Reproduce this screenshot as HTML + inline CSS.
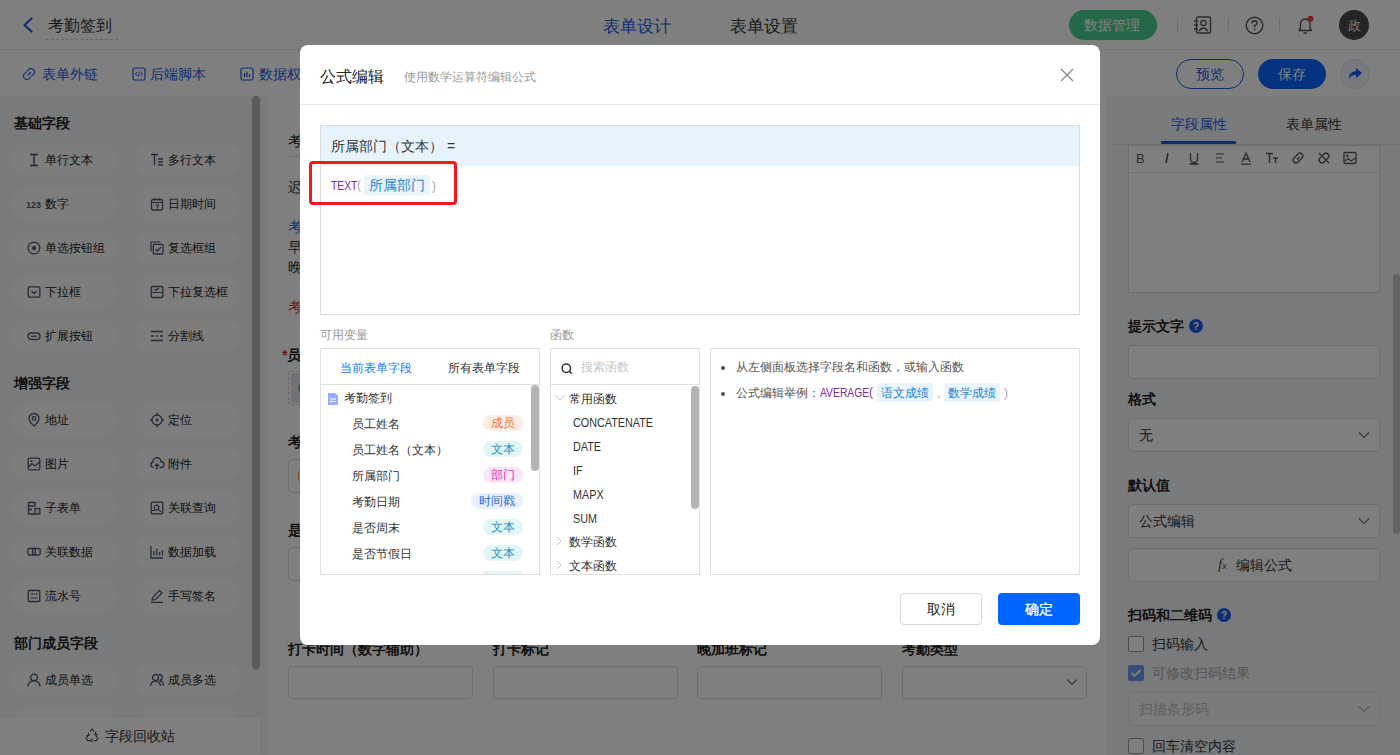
<!DOCTYPE html>
<html><head><meta charset="utf-8">
<style>
*{box-sizing:border-box;margin:0;padding:0}
html,body{width:1400px;height:755px;overflow:hidden;background:#fff;font-family:"Liberation Sans",sans-serif;color:#222;font-size:14px}
.a{position:absolute}
.t{position:absolute;white-space:nowrap;line-height:1}
svg{display:block}
/* header */
#hdr{left:0;top:0;width:1400px;height:50px;background:#fff;border-bottom:1px solid #e8e8ea}
#bar2{left:0;top:50px;width:1400px;height:46px;background:#fff}
#left{left:0;top:96px;width:268px;height:659px;background:#f3f4f7}
#canvas{left:268px;top:96px;width:838px;height:659px;background:#fff}
#right{left:1106px;top:96px;width:294px;height:659px;background:#f3f4f7}
.pill{position:absolute;width:105px;height:34px;border-radius:17px;background:#fafbfc}
.pill .ic{position:absolute;left:15px;top:10px;width:14px;height:14px}
.pill .tx{position:absolute;left:33px;top:11px;font-size:12px;line-height:13px;color:#222;white-space:nowrap}
.sec{position:absolute;left:14px;font-size:14px;font-weight:bold;color:#222;line-height:14px}
.inp{position:absolute;border:1px solid #d9d9d9;border-radius:4px;background:#fff}
.lbl{position:absolute;font-size:14px;font-weight:bold;color:#222;line-height:14px;white-space:nowrap}
#mask{left:0;top:0;width:1400px;height:755px;background:rgba(0,0,0,.5)}
#modal{left:300px;top:45px;width:800px;height:600px;background:#fff;border-radius:8px;overflow:hidden}
.box{position:absolute;border:1px solid #e3e3e3;background:#fff}
.tag{position:absolute;height:16px;border-radius:8px;font-size:12px;line-height:16px;padding:0 8px;white-space:nowrap}
.var{position:absolute;left:31px;font-size:12px;line-height:14px;color:#333;white-space:nowrap}
.fn{position:absolute;font-size:12px;line-height:14px;color:#333;white-space:nowrap;transform:scaleX(0.9);transform-origin:0 0}
</style></head><body>

<!-- ============ HEADER ============ -->
<div id="hdr" class="a">
  <svg class="a" style="left:21px;top:17px" width="14" height="16" viewBox="0 0 14 16"><path d="M10.5 1.5 L3.5 8 L10.5 14.5" fill="none" stroke="#1a5ce6" stroke-width="2.2" stroke-linecap="round" stroke-linejoin="round"/></svg>
  <div class="t" style="left:48px;top:18px;font-size:16px;color:#333">考勤签到</div>
  <div class="a" style="left:46px;top:39px;width:72px;border-top:1px dashed #ccc"></div>
  <div class="t" style="left:603px;top:18px;font-size:17px;color:#1a5ce6">表单设计</div>
  <div class="t" style="left:730px;top:18px;font-size:17px;color:#333">表单设置</div>
  <div class="a" style="left:1069px;top:10px;width:88px;height:30px;border-radius:15px;background:#4ad08f"></div>
  <div class="t" style="left:1084px;top:18px;font-size:14px;color:#fff">数据管理</div>
  <div class="a" style="left:1177px;top:18px;width:1px;height:14px;background:#ddd"></div>
  <div class="a" style="left:1228px;top:18px;width:1px;height:14px;background:#ddd"></div>
  <div class="a" style="left:1279px;top:18px;width:1px;height:14px;background:#ddd"></div>
  <svg class="a" style="left:1193px;top:16px" width="19" height="18" viewBox="0 0 19 18"><rect x="3.5" y="1" width="14" height="16" rx="1.5" fill="none" stroke="#555" stroke-width="1.4"/><circle cx="10.5" cy="7" r="2.6" fill="none" stroke="#555" stroke-width="1.4"/><path d="M6 15 Q10.5 9 15 15" fill="none" stroke="#555" stroke-width="1.4"/><path d="M1 5h4M1 9h4M1 13h4" stroke="#555" stroke-width="1.3"/></svg>
  <svg class="a" style="left:1245px;top:16px" width="19" height="19" viewBox="0 0 19 19"><circle cx="9.5" cy="9.5" r="8.3" fill="none" stroke="#555" stroke-width="1.4"/><path d="M7 7.3 Q7 4.8 9.5 4.8 Q12 4.8 12 7.1 Q12 8.6 9.6 9.6 L9.6 11.3" fill="none" stroke="#555" stroke-width="1.5"/><circle cx="9.6" cy="13.6" r="0.95" fill="#555"/></svg>
  <svg class="a" style="left:1296px;top:15px" width="20" height="20" viewBox="0 0 20 20"><path d="M3 15.5 H15.5 L14 13.5 V9 Q14 4.5 9.3 4 Q4.5 4.5 4.5 9 V13.5 Z" fill="none" stroke="#555" stroke-width="1.4" stroke-linejoin="round"/><path d="M7.5 18 H11" stroke="#555" stroke-width="1.4"/><circle cx="14.5" cy="3.8" r="3" fill="#e64545"/></svg>
  <div class="a" style="left:1339px;top:10px;width:30px;height:30px;border-radius:15px;background:#4a4a4a"></div>
  <div class="t" style="left:1348px;top:19px;font-size:13px;color:#eee">政</div>
</div>

<!-- ============ BAR2 ============ -->
<div id="bar2" class="a">
  <svg class="a" style="left:22px;top:17px" width="14" height="14" viewBox="0 0 14 14"><path d="M6 8 L8.5 5.5 M5.2 4.2 L7.2 2.2 Q9 0.6 10.8 2.2 L11.8 3.2 Q13.4 5 11.8 6.8 L9.8 8.8 M8.8 9.8 L6.8 11.8 Q5 13.4 3.2 11.8 L2.2 10.8 Q0.6 9 2.2 7.2 L4.2 5.2" fill="none" stroke="#1a5ce6" stroke-width="1.1" stroke-linecap="round"/></svg>
  <div class="t" style="left:42px;top:17px;font-size:14px;color:#1a5ce6">表单外链</div>
  <svg class="a" style="left:132px;top:17px" width="14" height="14" viewBox="0 0 14 14"><rect x="1" y="1" width="12" height="12" rx="1.5" fill="none" stroke="#1a5ce6" stroke-width="1.2"/><path d="M5 5 L3.5 7 L5 9 M9 5 L10.5 7 L9 9 M7.6 4.5 L6.4 9.5" fill="none" stroke="#1a5ce6" stroke-width="1"/></svg>
  <div class="t" style="left:150px;top:17px;font-size:14px;color:#1a5ce6">后端脚本</div>
  <svg class="a" style="left:240px;top:17px" width="14" height="14" viewBox="0 0 14 14"><rect x="1" y="1" width="12" height="12" rx="1.5" fill="none" stroke="#1a5ce6" stroke-width="1.2"/><path d="M4.5 10V6 M7 10V4.5 M9.5 10V7" stroke="#1a5ce6" stroke-width="1.2"/></svg>
  <div class="t" style="left:259px;top:17px;font-size:14px;color:#1a5ce6">数据权限</div>
  <div class="a" style="left:1176px;top:9px;width:68px;height:30px;border-radius:15px;border:1.5px solid #1a5ce6"></div>
  <div class="t" style="left:1196px;top:17px;font-size:14px;color:#1a5ce6">预览</div>
  <div class="a" style="left:1258px;top:9px;width:68px;height:30px;border-radius:15px;background:#0a66ff"></div>
  <div class="t" style="left:1278px;top:17px;font-size:14px;color:#fff">保存</div>
  <div class="a" style="left:1340px;top:9px;width:30px;height:30px;border-radius:15px;background:#eef2fb;border:1px solid #dde4f3"></div>
  <svg class="a" style="left:1347px;top:17px" width="16" height="14" viewBox="0 0 16 14"><path d="M9 1 L15 6 L9 11 V8 Q4 7.8 1.5 12.5 Q2 4.5 9 4 Z" fill="#1a5ce6"/></svg>
</div>

<!-- ============ LEFT PANEL ============ -->
<div id="left" class="a">
<div class="sec" style="top:20px">基础字段</div>
<div class="pill" style="left:12px;top:47px"><svg class="ic" width="14" height="14" viewBox="0 0 14 14" style="overflow:visible"><path d="M3 1.5H11M3 12.5H11M7 1.5V12.5" stroke="#4b5670" stroke-width="1.5" fill="none"/></svg><div class="tx">单行文本</div></div>
<div class="pill" style="left:135px;top:47px"><svg class="ic" width="14" height="14" viewBox="0 0 14 14" style="overflow:visible"><path d="M1 1.5H8M4.5 1.5V12.5M8 6H13M8 9H13M8 12H13" stroke="#4b5670" stroke-width="1.4" fill="none"/></svg><div class="tx">多行文本</div></div>
<div class="pill" style="left:12px;top:91px"><svg class="ic" width="14" height="14" viewBox="0 0 14 14" style="overflow:visible"><text x="-1" y="11" font-size="9" font-weight="bold" fill="#4b5670" font-family="Liberation Sans">123</text></svg><div class="tx">数字</div></div>
<div class="pill" style="left:135px;top:91px"><svg class="ic" width="14" height="14" viewBox="0 0 14 14" style="overflow:visible"><rect x="1.5" y="2.5" width="11" height="10.5" rx="1.5" stroke="#4b5670" stroke-width="1.3" fill="none"/><path d="M1.5 5.5H12.5M4.5 1V3.5M9.5 1V3.5M5.5 8H8.5L6.8 11.5" stroke="#4b5670" stroke-width="1.1" fill="none"/></svg><div class="tx">日期时间</div></div>
<div class="pill" style="left:12px;top:135px"><svg class="ic" width="14" height="14" viewBox="0 0 14 14" style="overflow:visible"><circle cx="7" cy="7" r="5.8" stroke="#4b5670" stroke-width="1.3" fill="none"/><circle cx="7" cy="7" r="2" fill="#4b5670"/></svg><div class="tx">单选按钮组</div></div>
<div class="pill" style="left:135px;top:135px"><svg class="ic" width="14" height="14" viewBox="0 0 14 14" style="overflow:visible"><path d="M1 10.5V1H10.5" stroke="#4b5670" stroke-width="1.2" fill="none"/><rect x="3.3" y="3.3" width="9.7" height="9.7" rx="1" stroke="#4b5670" stroke-width="1.3" fill="none"/><path d="M5.5 8L7.5 10L11 6" stroke="#4b5670" stroke-width="1.3" fill="none"/></svg><div class="tx">复选框组</div></div>
<div class="pill" style="left:12px;top:179px"><svg class="ic" width="14" height="14" viewBox="0 0 14 14" style="overflow:visible"><rect x="1.2" y="1.8" width="11.6" height="10.4" rx="1" stroke="#4b5670" stroke-width="1.3" fill="none"/><path d="M4.5 6L7 8.5L9.5 6" stroke="#4b5670" stroke-width="1.3" fill="none"/></svg><div class="tx">下拉框</div></div>
<div class="pill" style="left:135px;top:179px"><svg class="ic" width="14" height="14" viewBox="0 0 14 14" style="overflow:visible"><rect x="1.2" y="1.5" width="11.6" height="11" rx="1.5" stroke="#4b5670" stroke-width="1.3" fill="none"/><path d="M1.2 7.5H12.8M4.5 4L6 5.3L9 3" stroke="#4b5670" stroke-width="1.2" fill="none"/></svg><div class="tx">下拉复选框</div></div>
<div class="pill" style="left:12px;top:223px"><svg class="ic" width="14" height="14" viewBox="0 0 14 14" style="overflow:visible"><rect x="1" y="4" width="12" height="6.5" rx="3.25" stroke="#4b5670" stroke-width="1.4" fill="none"/><path d="M4 7.25H10" stroke="#4b5670" stroke-width="1.2"/></svg><div class="tx">扩展按钮</div></div>
<div class="pill" style="left:135px;top:223px"><svg class="ic" width="14" height="14" viewBox="0 0 14 14" style="overflow:visible"><path d="M1 2.5H13M1 7H4M6 7H8M10 7H13M1 11.5H13" stroke="#4b5670" stroke-width="1.3" fill="none"/></svg><div class="tx">分割线</div></div>
<div class="sec" style="top:280px">增强字段</div>
<div class="pill" style="left:12px;top:307px"><svg class="ic" width="14" height="14" viewBox="0 0 14 14" style="overflow:visible"><path d="M7 13C7 13 2 8.5 2 5.5A5 5 0 0 1 12 5.5C12 8.5 7 13 7 13Z" stroke="#4b5670" stroke-width="1.3" fill="none"/><circle cx="7" cy="5.5" r="1.8" stroke="#4b5670" stroke-width="1.2" fill="none"/></svg><div class="tx">地址</div></div>
<div class="pill" style="left:135px;top:307px"><svg class="ic" width="14" height="14" viewBox="0 0 14 14" style="overflow:visible"><circle cx="7" cy="7" r="5" stroke="#4b5670" stroke-width="1.3" fill="none"/><circle cx="7" cy="7" r="1.5" fill="#4b5670"/><path d="M7 0V2.5M7 11.5V14M0 7H2.5M11.5 7H14" stroke="#4b5670" stroke-width="1.3"/></svg><div class="tx">定位</div></div>
<div class="pill" style="left:12px;top:351px"><svg class="ic" width="14" height="14" viewBox="0 0 14 14" style="overflow:visible"><rect x="1.2" y="1.2" width="11.6" height="11.6" rx="1.5" stroke="#4b5670" stroke-width="1.3" fill="none"/><path d="M1.5 10L5 6.5L8 9L12.5 5" stroke="#4b5670" stroke-width="1.2" fill="none"/><circle cx="4.5" cy="4.2" r="1" fill="#4b5670"/></svg><div class="tx">图片</div></div>
<div class="pill" style="left:135px;top:351px"><svg class="ic" width="14" height="14" viewBox="0 0 14 14" style="overflow:visible"><path d="M3.5 10.5A2.8 2.8 0 0 1 3 5A4 4 0 0 1 11 4.5A3 3 0 0 1 11 10.5H9.5M7 12.5V7M5 9L7 7L9 9" stroke="#4b5670" stroke-width="1.3" fill="none"/></svg><div class="tx">附件</div></div>
<div class="pill" style="left:12px;top:395px"><svg class="ic" width="14" height="14" viewBox="0 0 14 14" style="overflow:visible"><path d="M8 13H1.5V1.5H8V5M1.5 5H8M1.5 8.5H5" stroke="#4b5670" stroke-width="1.3" fill="none"/><rect x="8" y="7.5" width="4.8" height="5.5" stroke="#4b5670" stroke-width="1.3" fill="none"/></svg><div class="tx">子表单</div></div>
<div class="pill" style="left:135px;top:395px"><svg class="ic" width="14" height="14" viewBox="0 0 14 14" style="overflow:visible"><rect x="1.2" y="1.2" width="11.6" height="11.6" rx="1" stroke="#4b5670" stroke-width="1.3" fill="none"/><circle cx="6.5" cy="6.5" r="2.3" stroke="#4b5670" stroke-width="1.2" fill="none"/><path d="M8.3 8.3L11 11M1.2 9.5H5" stroke="#4b5670" stroke-width="1.2"/></svg><div class="tx">关联查询</div></div>
<div class="pill" style="left:12px;top:439px"><svg class="ic" width="14" height="14" viewBox="0 0 14 14" style="overflow:visible"><rect x="0.8" y="3.5" width="7.5" height="6.5" rx="1.5" stroke="#4b5670" stroke-width="1.3" fill="none"/><rect x="5.7" y="3.5" width="7.5" height="6.5" rx="1.5" stroke="#4b5670" stroke-width="1.3" fill="none"/></svg><div class="tx">关联数据</div></div>
<div class="pill" style="left:135px;top:439px"><svg class="ic" width="14" height="14" viewBox="0 0 14 14" style="overflow:visible"><path d="M1 1V13H13M4 10.5V6M6.8 10.5V3.5M9.6 10.5V7M12.4 10.5V5" stroke="#4b5670" stroke-width="1.3" fill="none"/></svg><div class="tx">数据加载</div></div>
<div class="pill" style="left:12px;top:483px"><svg class="ic" width="14" height="14" viewBox="0 0 14 14" style="overflow:visible"><rect x="1.2" y="1.5" width="11.6" height="11" rx="1" stroke="#4b5670" stroke-width="1.3" fill="none"/><path d="M3.5 5H8M3.5 9H10.5M9.5 4V6" stroke="#4b5670" stroke-width="1.2" fill="none"/></svg><div class="tx">流水号</div></div>
<div class="pill" style="left:135px;top:483px"><svg class="ic" width="14" height="14" viewBox="0 0 14 14" style="overflow:visible"><path d="M2 11L3 8L9.5 1.5L12 4L5.5 10.5Z M1 13.3H13" stroke="#4b5670" stroke-width="1.2" fill="none"/></svg><div class="tx">手写签名</div></div>
<div class="sec" style="top:540px">部门成员字段</div>
<div class="pill" style="left:12px;top:567px"><svg class="ic" width="14" height="14" viewBox="0 0 14 14" style="overflow:visible"><circle cx="7" cy="4.5" r="3.3" stroke="#4b5670" stroke-width="1.3" fill="none"/><path d="M1 13.5A6 6 0 0 1 13 13.5" stroke="#4b5670" stroke-width="1.3" fill="none"/></svg><div class="tx">成员单选</div></div>
<div class="pill" style="left:135px;top:567px"><svg class="ic" width="14" height="14" viewBox="0 0 14 14" style="overflow:visible"><circle cx="5.5" cy="4.5" r="3" stroke="#4b5670" stroke-width="1.3" fill="none"/><path d="M0.5 13A5 5 0 0 1 10.5 13M9 1.5A3 3 0 0 1 9.5 7.5A5 5 0 0 1 13.5 13" stroke="#4b5670" stroke-width="1.3" fill="none"/></svg><div class="tx">成员多选</div></div>
<div class="pill" style="left:12px;top:611px"><svg class="ic" width="14" height="14" viewBox="0 0 14 14" style="overflow:visible"></svg><div class="tx">部门单选</div></div>
<div class="pill" style="left:135px;top:611px"><svg class="ic" width="14" height="14" viewBox="0 0 14 14" style="overflow:visible"></svg><div class="tx">部门多选</div></div>
<div class="a" style="left:252px;top:0px;width:8px;height:574px;border-radius:4px;background:#b6b6b6"></div>
<div class="a" style="left:0;top:621px;width:260px;height:38px;background:#fff;box-shadow:0 -1px 3px rgba(0,0,0,.04)"></div>
<svg class="a" style="left:85px;top:632px" width="14" height="14" viewBox="0 0 14 14"><path d="M5 3.5L7 0.8L9 3.5M9.8 5.5L12.8 10.5L11.3 12.6H8.5M5.5 12.6H2.7L1.2 10.5L3.8 6" fill="none" stroke="#555" stroke-width="1.1" stroke-linejoin="round"/><path d="M7.5 10.6L5.5 12.6L7.5 14.2M3.2 4.6L4 7.4L1.3 7.9M11 3.5L10.2 6.3L12.8 6.7" fill="none" stroke="#555" stroke-width="1.1"/></svg>
<div class="t" style="left:105px;top:633px;font-size:14px;color:#333">字段回收站</div>
</div>

<!-- ============ CANVAS ============ -->
<div id="canvas" class="a">
<div class="t" style="left:20px;top:38px;font-size:14px;color:#222">考勤签到表单</div>
<div class="a" style="left:20px;top:60px;width:798px;height:1px;background:#e5e5e5"></div>
<div class="t" style="left:20px;top:84px;font-size:14px;color:#333;">迟到早退规则说明：上班时间 09:00，下班时间 18:00</div>
<div class="t" style="left:20px;top:124px;font-size:14px;color:#1a6fd0;">考勤规则</div>
<div class="t" style="left:20px;top:144px;font-size:14px;color:#333;">早上 09:00 之后打卡记为迟到</div>
<div class="t" style="left:20px;top:164px;font-size:14px;color:#333;">晚上 18:00 之前打卡记为早退</div>
<div class="t" style="left:20px;top:204px;font-size:14px;color:#d0302a;">考勤异常请及时联系管理员</div>
<div class="t" style="left:14px;top:252px;font-size:14px;color:#222;font-weight:bold"><span style="color:#d0302a">*</span>员工姓名</div>
<div class="a" style="left:20px;top:275px;width:200px;height:34px;border:1px dashed #ccc;border-radius:3px"></div>
<div class="a" style="left:23px;top:277px;width:90px;height:30px;border-radius:3px;background:#eadff0"></div>
<div class="a" style="left:30px;top:286px;width:12px;height:12px;border-radius:6px;background:#45c46a"></div>
<div class="t" style="left:20px;top:339px;font-size:14px;color:#222;font-weight:bold">考勤日期</div>
<div class="inp" style="left:20px;top:363px;width:380px;height:34px"></div>
<div class="a" style="left:30px;top:375px;width:10px;height:10px;border:1.5px solid #f0a040;border-radius:2px"></div>
<div class="t" style="left:20px;top:427px;font-size:14px;color:#222;font-weight:bold">是否周末</div>
<div class="inp" style="left:20px;top:451px;width:380px;height:34px"></div>
<div class="t" style="left:20px;top:546px;font-size:14px;color:#222;font-weight:bold">打卡时间（数字辅助）</div>
<div class="t" style="left:225px;top:546px;font-size:14px;color:#222;font-weight:bold">打卡标记</div>
<div class="t" style="left:429px;top:546px;font-size:14px;color:#222;font-weight:bold">晚加班标记</div>
<div class="t" style="left:634px;top:546px;font-size:14px;color:#222;font-weight:bold">考勤类型</div>
<div class="inp" style="left:20px;top:570px;width:185px;height:33px"></div>
<div class="inp" style="left:225px;top:570px;width:185px;height:33px"></div>
<div class="inp" style="left:429px;top:570px;width:185px;height:33px"></div>
<div class="inp" style="left:634px;top:570px;width:185px;height:33px"></div>
<svg class="a" style="left:798px;top:582px" width="12" height="8" viewBox="0 0 12 8"><path d="M1 1.5L6 6.5L11 1.5" fill="none" stroke="#777" stroke-width="1.1"/></svg>
</div>

<!-- ============ RIGHT PANEL ============ -->
<div id="right" class="a">
<div class="t" style="left:65px;top:21px;font-size:14px;color:#1a5ce6;">字段属性</div>
<div class="t" style="left:180px;top:21px;font-size:14px;color:#333;">表单属性</div>
<div class="a" style="left:55px;top:45px;width:75px;height:3px;background:#1a5ce6"></div>
<div class="a" style="left:8px;top:48px;width:286px;height:1px;background:#dcdcdc"></div>
<div class="a" style="left:22px;top:49px;width:252px;height:148px;background:#fff;border:1px solid #dcdcdc"></div>
<div class="a" style="left:23px;top:76px;width:250px;height:1px;background:#e3e3e3"></div>
<svg class="a" style="left:29px;top:55px" width="14" height="14" viewBox="0 0 14 14"><text x="1" y="12" font-size="13" fill="#555" font-family="Liberation Sans">B</text></svg>
<svg class="a" style="left:54px;top:55px" width="14" height="14" viewBox="0 0 14 14"><path d="M8 2L6 12" stroke="#555" stroke-width="1.6"/></svg>
<svg class="a" style="left:81px;top:55px" width="14" height="14" viewBox="0 0 14 14"><path d="M3.5 2V8A3.5 3.5 0 0 0 10.5 8V2M2.5 13H11.5" stroke="#555" stroke-width="1.3" fill="none"/></svg>
<svg class="a" style="left:107px;top:55px" width="14" height="14" viewBox="0 0 14 14"><path d="M3 3H11M3 7H9M3 11H11" stroke="#555" stroke-width="1.2" fill="none"/></svg>
<svg class="a" style="left:133px;top:55px" width="14" height="14" viewBox="0 0 14 14"><path d="M3 11L7 2L11 11M4.5 8H9.5M2 13.2H12" stroke="#555" stroke-width="1.3" fill="none"/></svg>
<svg class="a" style="left:159px;top:55px" width="14" height="14" viewBox="0 0 14 14"><path d="M1 2.5H8M4.5 2.5V12M8 7H13M10.5 7V12" stroke="#555" stroke-width="1.5" fill="none"/></svg>
<svg class="a" style="left:185px;top:55px" width="14" height="14" viewBox="0 0 14 14"><path d="M6 8.5L8.5 6M5 5L7 3A2.3 2.3 0 0 1 11 7L9 9M9 9L7 11A2.3 2.3 0 0 1 3 7L5 5" stroke="#555" stroke-width="1.3" fill="none"/></svg>
<svg class="a" style="left:211px;top:55px" width="14" height="14" viewBox="0 0 14 14"><path d="M5 5L7 3A2.3 2.3 0 0 1 11 7L9 9M9 9L7 11A2.3 2.3 0 0 1 3 7L5 5M2 2L12 12" stroke="#555" stroke-width="1.3" fill="none"/></svg>
<svg class="a" style="left:237px;top:55px" width="14" height="14" viewBox="0 0 14 14"><rect x="1" y="1.5" width="12" height="11" rx="1" stroke="#555" stroke-width="1.3" fill="none"/><path d="M1.5 10.5L5 7.5L8 10L12.5 7" stroke="#555" stroke-width="1.2" fill="none"/><circle cx="4.5" cy="5" r="1.2" fill="#555"/></svg>
<div class="t" style="left:22px;top:223px;font-size:14px;color:#222;font-weight:bold">提示文字</div>
<svg class="a" style="left:83px;top:223px" width="14" height="14" viewBox="0 0 14 14"><circle cx="7" cy="7" r="7" fill="#1a5ce6"/><text x="7" y="11" text-anchor="middle" font-size="10" font-weight="bold" fill="#fff" font-family="Liberation Sans">?</text></svg>
<div class="a" style="left:22px;top:249px;width:252px;height:34px;background:#fff;border:1px solid #dcdcdc;border-radius:4px"></div>
<div class="t" style="left:22px;top:296px;font-size:14px;color:#222;font-weight:bold">格式</div>
<div class="a" style="left:22px;top:322px;width:252px;height:34px;background:#fff;border:1px solid #dcdcdc;border-radius:4px"></div>
<div class="t" style="left:33px;top:332px;font-size:14px;color:#333;">无</div>
<svg class="a" style="left:252px;top:335px" width="12" height="8" viewBox="0 0 12 8"><path d="M1 1.5L6 6.5L11 1.5" fill="none" stroke="#777" stroke-width="1.1"/></svg>
<div class="t" style="left:22px;top:382px;font-size:14px;color:#222;font-weight:bold">默认值</div>
<div class="a" style="left:22px;top:408px;width:252px;height:34px;background:#fff;border:1px solid #dcdcdc;border-radius:4px"></div>
<div class="t" style="left:33px;top:418px;font-size:14px;color:#333;">公式编辑</div>
<svg class="a" style="left:252px;top:421px" width="12" height="8" viewBox="0 0 12 8"><path d="M1 1.5L6 6.5L11 1.5" fill="none" stroke="#777" stroke-width="1.1"/></svg>
<div class="a" style="left:22px;top:452px;width:252px;height:34px;background:#fff;border:1px solid #dcdcdc;border-radius:4px"></div>
<div class="t" style="left:112px;top:461px;font-size:14px;color:#555;"><i style="font-family:Liberation Serif;font-size:15px;color:#555">f</i><span style="font-size:9px;color:#555">x</span></div>
<div class="t" style="left:130px;top:462px;font-size:14px;color:#333;">编辑公式</div>
<div class="t" style="left:22px;top:512px;font-size:14px;color:#222;font-weight:bold">扫码和二维码</div>
<svg class="a" style="left:111px;top:512px" width="14" height="14" viewBox="0 0 14 14"><circle cx="7" cy="7" r="7" fill="#1a5ce6"/><text x="7" y="11" text-anchor="middle" font-size="10" font-weight="bold" fill="#fff" font-family="Liberation Sans">?</text></svg>
<div class="a" style="left:22px;top:540px;width:16px;height:16px;background:#fff;border:1px solid #9a9a9a;border-radius:2px"></div>
<div class="t" style="left:46px;top:541px;font-size:14px;color:#333;">扫码输入</div>
<div class="a" style="left:22px;top:569px;width:16px;height:16px;background:#6b9cf0;border-radius:2px"></div>
<svg class="a" style="left:22px;top:569px" width="16" height="16" viewBox="0 0 16 16"><path d="M3.5 8L6.5 11L12.5 5" fill="none" stroke="#fff" stroke-width="1.8"/></svg>
<div class="t" style="left:46px;top:570px;font-size:14px;color:#aaa;">可修改扫码结果</div>
<div class="a" style="left:22px;top:596px;width:252px;height:34px;background:#f7f7f7;border:1px solid #e3e3e3;border-radius:4px"></div>
<div class="t" style="left:33px;top:606px;font-size:14px;color:#bbb;">扫描条形码</div>
<svg class="a" style="left:252px;top:609px" width="12" height="8" viewBox="0 0 12 8"><path d="M1 1.5L6 6.5L11 1.5" fill="none" stroke="#bbb" stroke-width="1.3"/></svg>
<div class="a" style="left:22px;top:642px;width:16px;height:16px;background:#fff;border:1px solid #9a9a9a;border-radius:2px"></div>
<div class="t" style="left:46px;top:643px;font-size:14px;color:#333;">回车清空内容</div>
<div class="a" style="left:287px;top:178px;width:7px;height:260px;background:#c8c8c8;border-radius:3px"></div>
</div>

<!-- ============ MASK ============ -->
<div id="mask" class="a"></div>

<!-- ============ MODAL ============ -->
<div id="modal" class="a">
  <div class="t" style="left:20px;top:24px;font-size:16px;color:#222">公式编辑</div>
  <div class="t" style="left:104px;top:26px;font-size:12px;color:#999">使用数学运算符编辑公式</div>
  <svg class="a" style="left:760px;top:23px" width="14" height="14" viewBox="0 0 14 14"><path d="M1 1L13 13M13 1L1 13" stroke="#888" stroke-width="1.3"/></svg>
  <div class="a" style="left:0;top:59px;width:800px;height:1px;background:#e8e8e8"></div>
  <!-- formula box -->
  <div class="box" style="left:20px;top:80px;width:760px;height:190px;border-color:#dcdcdc"></div>
  <div class="a" style="left:21px;top:81px;width:758px;height:40px;background:#e6f3fd"></div>
  <div class="t" style="left:31px;top:94px;font-size:14px;color:#333">所属部门（文本） =</div>
  <div class="t" style="left:31px;top:135px;font-size:12px;color:#7a2ca0;transform:scaleX(0.86);transform-origin:0 0">TEXT</div>
  <div class="t" style="left:57px;top:134px;font-size:12px;color:#aaa">(</div>
  <div class="a" style="left:64px;top:130px;width:66px;height:20px;border-radius:3px;background:#ebf4fb"></div>
  <div class="t" style="left:69px;top:133px;font-size:14px;color:#1c83d4">所属部门</div>
  <div class="t" style="left:132px;top:135px;font-size:12px;color:#aaa">)</div>
  <div class="a" style="left:9px;top:116px;width:148px;height:44px;border:3px solid #f01a1a;border-radius:4px"></div>
  <!-- labels -->
  <div class="t" style="left:20px;top:284px;font-size:12px;color:#999">可用变量</div>
  <div class="t" style="left:250px;top:284px;font-size:12px;color:#999">函数</div>
  <!-- variables box -->
  <div class="box" style="left:20px;top:303px;width:220px;height:227px;border-color:#e0e0e0"></div>
  <div class="t" style="left:40px;top:317px;font-size:12px;color:#1677ff">当前表单字段</div>
  <div class="t" style="left:148px;top:317px;font-size:12px;color:#333">所有表单字段</div>
  <div class="a" style="left:21px;top:339px;width:218px;height:1px;background:#e0e0e0"></div>
  <div class="a" style="left:231px;top:340px;width:8px;height:86px;border-radius:4px;background:#b5b5b5"></div>
  <svg class="a" style="left:28px;top:348px" width="11" height="12" viewBox="0 0 11 12"><path d="M0 0H7L10 3V12H0Z" fill="#98aefc"/><path d="M2 6H8M2 8.5H8" stroke="#fff" stroke-width="1"/></svg>
  <div class="t" style="left:44px;top:347px;font-size:12px;color:#333">考勤签到</div>
  <div class="t" style="left:52px;top:373px;font-size:12px;color:#333">员工姓名</div>
  <div class="tag" style="left:183px;top:370px;width:40px;background:#fdece3;color:#f0782f;text-align:center;padding:0">成员</div>
  <div class="t" style="left:52px;top:399px;font-size:12px;color:#333">员工姓名（文本）</div>
  <div class="tag" style="left:183px;top:396px;width:40px;background:#e4f5f6;color:#1a90c8;text-align:center;padding:0">文本</div>
  <div class="t" style="left:52px;top:425px;font-size:12px;color:#333">所属部门</div>
  <div class="tag" style="left:183px;top:422px;width:40px;background:#fbe6f7;color:#d42fb8;text-align:center;padding:0">部门</div>
  <div class="t" style="left:52px;top:451px;font-size:12px;color:#333">考勤日期</div>
  <div class="tag" style="left:171px;top:448px;width:52px;background:#e9f0fd;color:#1f6fd8;text-align:center;padding:0">时间戳</div>
  <div class="t" style="left:52px;top:477px;font-size:12px;color:#333">是否周末</div>
  <div class="tag" style="left:183px;top:474px;width:40px;background:#e4f5f6;color:#1a90c8;text-align:center;padding:0">文本</div>
  <div class="t" style="left:52px;top:503px;font-size:12px;color:#333">是否节假日</div>
  <div class="tag" style="left:183px;top:500px;width:40px;background:#e4f5f6;color:#1a90c8;text-align:center;padding:0">文本</div>
  <div class="tag" style="left:183px;top:526px;width:40px;height:3px;border-radius:8px 8px 0 0;background:#e4f5f6"></div>
  <!-- functions box -->
  <div class="box" style="left:250px;top:303px;width:150px;height:227px;border-color:#e0e0e0"></div>
  <svg class="a" style="left:261px;top:318px" width="12" height="12" viewBox="0 0 12 12"><circle cx="5.3" cy="5.3" r="4.2" fill="none" stroke="#333" stroke-width="1.5"/><path d="M8.3 8.3L10.8 10.8" stroke="#333" stroke-width="1.6"/></svg>
  <div class="t" style="left:281px;top:316px;font-size:12px;color:#c8c8c8">搜索函数</div>
  <div class="a" style="left:251px;top:339px;width:148px;height:1px;background:#e0e0e0"></div>
  <div class="a" style="left:391px;top:341px;width:8px;height:123px;border-radius:4px;background:#b5b5b5"></div>
  <svg class="a" style="left:254px;top:349px" width="12" height="8" viewBox="0 0 12 8"><path d="M1 1L6 6L11 1" fill="none" stroke="#c8c8c8" stroke-width="1"/></svg>
  <div class="t" style="left:269px;top:348px;font-size:12px;color:#333">常用函数</div>
  <div class="fn" style="left:273px;top:371px">CONCATENATE</div>
  <div class="fn" style="left:273px;top:395px">DATE</div>
  <div class="fn" style="left:273px;top:419px">IF</div>
  <div class="fn" style="left:273px;top:443px">MAPX</div>
  <div class="fn" style="left:273px;top:467px">SUM</div>
  <svg class="a" style="left:256px;top:491px" width="6" height="10" viewBox="0 0 6 10"><path d="M1 1L5 5L1 9" fill="none" stroke="#c8c8c8" stroke-width="1"/></svg>
  <div class="t" style="left:269px;top:491px;font-size:12px;color:#333">数学函数</div>
  <svg class="a" style="left:256px;top:515px" width="6" height="10" viewBox="0 0 6 10"><path d="M1 1L5 5L1 9" fill="none" stroke="#c8c8c8" stroke-width="1"/></svg>
  <div class="t" style="left:269px;top:515px;font-size:12px;color:#333">文本函数</div>
  <!-- desc box -->
  <div class="box" style="left:410px;top:303px;width:370px;height:227px;border-color:#e0e0e0"></div>
  <div class="a" style="left:421px;top:321px;width:4px;height:4px;border-radius:2px;background:#555"></div>
  <div class="t" style="left:436px;top:316px;font-size:12px;color:#555">从左侧面板选择字段名和函数，或输入函数</div>
  <div class="a" style="left:421px;top:347px;width:4px;height:4px;border-radius:2px;background:#555"></div>
  <div class="t" style="left:436px;top:342px;font-size:12px;color:#555">公式编辑举例：</div>
  <div class="t" style="left:520px;top:342px;font-size:12px;color:#7a2ca0;transform:scaleX(0.86);transform-origin:0 0">AVERAGE</div>
  <div class="t" style="left:569px;top:341px;font-size:12px;color:#7a2ca0">(</div>
  <div class="a" style="left:577px;top:338px;width:56px;height:19px;border-radius:3px;background:#eaf4fc"></div>
  <div class="t" style="left:581px;top:342px;font-size:12px;color:#1c83d4">语文成绩</div>
  <div class="t" style="left:637px;top:342px;font-size:12px;color:#aaa">,</div>
  <div class="a" style="left:644px;top:338px;width:56px;height:19px;border-radius:3px;background:#eaf4fc"></div>
  <div class="t" style="left:648px;top:342px;font-size:12px;color:#1c83d4">数学成绩</div>
  <div class="t" style="left:704px;top:342px;font-size:12px;color:#aaa">)</div>
  <!-- buttons -->
  <div class="a" style="left:600px;top:548px;width:82px;height:32px;border:1px solid #d9d9d9;border-radius:4px;background:#fff"></div>
  <div class="t" style="left:627px;top:557px;font-size:14px;color:#222">取消</div>
  <div class="a" style="left:698px;top:548px;width:82px;height:32px;border-radius:4px;background:#0066ff"></div>
  <div class="t" style="left:725px;top:557px;font-size:14px;color:#fff;-webkit-text-stroke:0.3px #fff">确定</div>
</div>

</body></html>
